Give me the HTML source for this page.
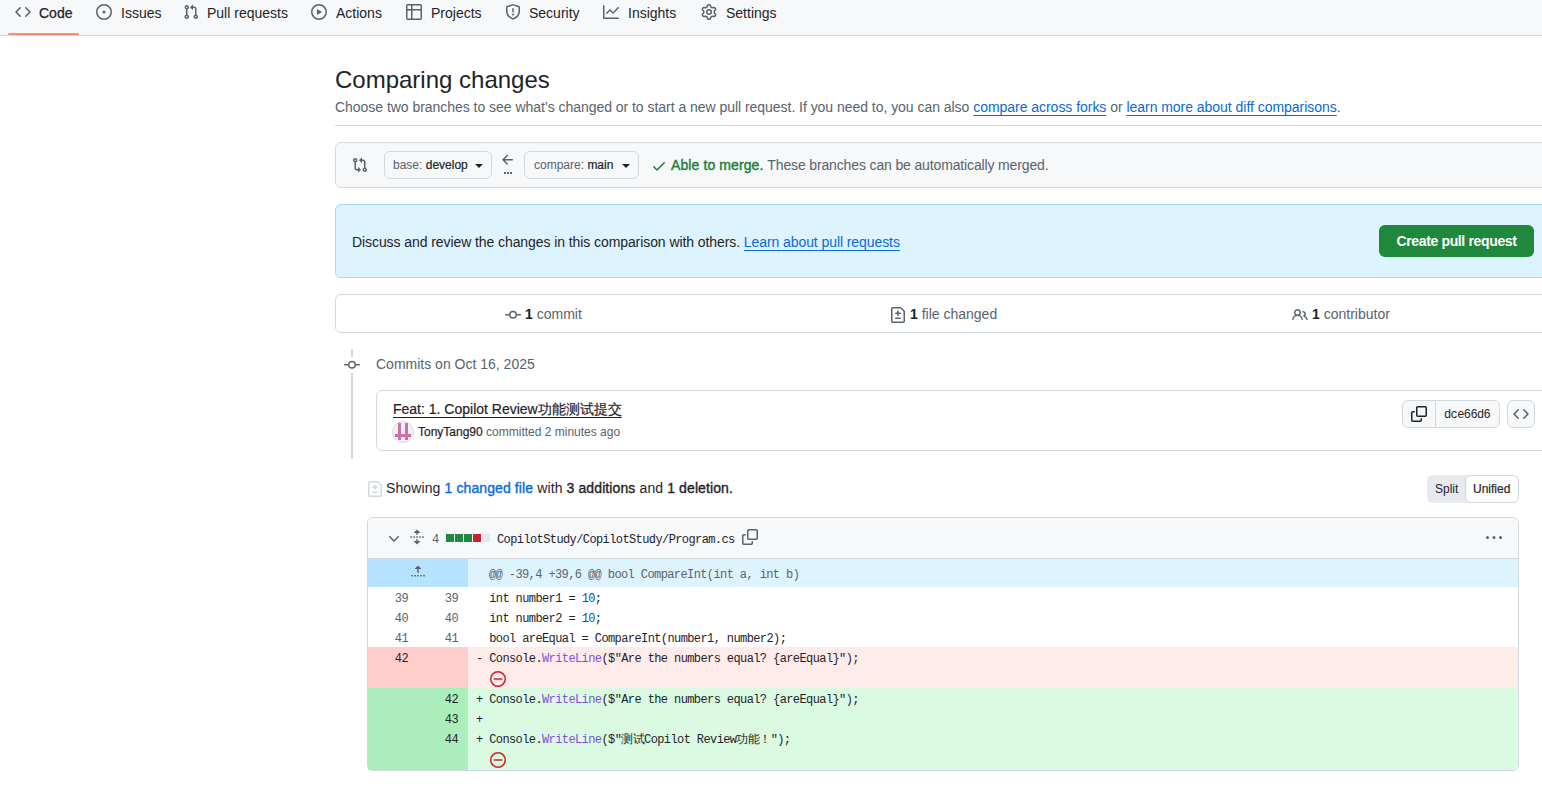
<!DOCTYPE html>
<html><head><meta charset="utf-8">
<style>
*{box-sizing:border-box;margin:0;padding:0}
html,body{width:1542px;height:791px;overflow:hidden;background:#fff}
body{position:relative;font-family:"Liberation Sans",sans-serif;color:#1f2328;font-size:14px;line-height:20px}
.a{position:absolute;white-space:nowrap}
svg{display:block}
.nav{position:absolute;left:0;top:0;width:1542px;height:36px;background:#f6f8fa;border-bottom:1px solid #d1d9e0}
.ni{position:absolute;top:3px;font-size:14px;line-height:20px;color:#1f2328}
.nic{position:absolute;top:4px;fill:#59636e}
.muted{color:#59636e}
.link{color:#0969da;text-decoration:underline;text-underline-offset:3px;text-decoration-skip-ink:none}
.sb{-webkit-text-stroke:0.35px #1f2328}
.mono{font-family:"Liberation Mono",monospace}

.diff .r{position:relative;height:20px;line-height:20px;color:#1f2328}
.diff .n1,.diff .n2{position:absolute;top:0;width:50px;height:20px;text-align:right;padding-right:10px;padding-top:2px;color:#59636e}
.diff .n1{left:0}.diff .n2{left:50px}
.diff .c{position:absolute;left:108px;top:2px;white-space:pre}
.diff .k{color:#0550ae}.diff .f{color:#8250df}
.diff .nl2{position:absolute;left:122px;top:24px;fill:#cf222e}
.diff .nlx{position:absolute;left:122px;top:24px;width:16px;height:16px;border:1.4px solid #cf222e;border-radius:50%}
.diff .nl div{position:absolute;left:2.8px;top:6.5px;width:7.6px;height:1.4px;background:#cf222e}
</style></head><body>

<!-- NAV -->
<div class="nav">
  <div class="a" style="left:8px;top:33px;width:71px;height:2px;background:#fd8c73;border-radius:2px"></div>
  <svg class="nic" style="left:15px" width="16" height="16" viewBox="0 0 16 16"><path d="m11.28 3.22 4.25 4.25a.75.75 0 0 1 0 1.06l-4.25 4.25a.749.749 0 0 1-1.275-.326.749.749 0 0 1 .215-.734L13.94 8l-3.72-3.72a.749.749 0 0 1 .326-1.275.749.749 0 0 1 .734.215Zm-6.56 0a.751.751 0 0 1 1.042.018.751.751 0 0 1 .018 1.042L2.06 8l3.72 3.72a.749.749 0 0 1-.326 1.275.749.749 0 0 1-.734-.215L.47 8.53a.75.75 0 0 1 0-1.06Z"/></svg>
  <div class="ni" style="left:39px;-webkit-text-stroke:0.25px #1f2328">Code</div>
  <svg class="nic" style="left:96px" width="16" height="16" viewBox="0 0 16 16"><path d="M8 9.5a1.5 1.5 0 1 0 0-3 1.5 1.5 0 0 0 0 3Z"/><path d="M8 0a8 8 0 1 1 0 16A8 8 0 0 1 8 0ZM1.5 8a6.5 6.5 0 1 0 13 0 6.5 6.5 0 0 0-13 0Z"/></svg>
  <div class="ni" style="left:121px">Issues</div>
  <svg class="nic" style="left:183px" width="16" height="16" viewBox="0 0 16 16"><path d="M1.5 3.25a2.25 2.25 0 1 1 3 2.122v5.256a2.251 2.251 0 1 1-1.5 0V5.372A2.25 2.25 0 0 1 1.5 3.25Zm5.677-.177L9.573.677A.25.25 0 0 1 10 .854V2.5h1A2.5 2.5 0 0 1 13.5 5v5.628a2.251 2.251 0 1 1-1.5 0V5a1 1 0 0 0-1-1h-1v1.646a.25.25 0 0 1-.427.177L7.177 3.427a.25.25 0 0 1 0-.354ZM3.75 2.5a.75.75 0 1 0 0 1.5.75.75 0 0 0 0-1.5Zm0 9.5a.75.75 0 1 0 0 1.5.75.75 0 0 0 0-1.5Zm8.25.75a.75.75 0 1 0 1.5 0 .75.75 0 0 0-1.5 0Z"/></svg>
  <div class="ni" style="left:207px">Pull requests</div>
  <svg class="nic" style="left:311px" width="16" height="16" viewBox="0 0 16 16"><path d="M8 0a8 8 0 1 1 0 16A8 8 0 0 1 8 0ZM1.5 8a6.5 6.5 0 1 0 13 0 6.5 6.5 0 0 0-13 0Zm4.879-2.773 4.264 2.559a.25.25 0 0 1 0 .428l-4.264 2.559A.25.25 0 0 1 6 10.559V5.442a.25.25 0 0 1 .379-.215Z"/></svg>
  <div class="ni" style="left:336px">Actions</div>
  <svg class="nic" style="left:406px" width="16" height="16" viewBox="0 0 16 16"><path d="M0 1.75C0 .784.784 0 1.75 0h12.5C15.216 0 16 .784 16 1.75v12.5A1.75 1.75 0 0 1 14.25 16H1.75A1.75 1.75 0 0 1 0 14.25ZM6.5 6.5v8h7.75a.25.25 0 0 0 .25-.25V6.5Zm8-1.5V1.75a.25.25 0 0 0-.25-.25H6.5V5Zm-13 1.5v7.75c0 .138.112.25.25.25H5v-8ZM5 5V1.5H1.75a.25.25 0 0 0-.25.25V5Z"/></svg>
  <div class="ni" style="left:431px">Projects</div>
  <svg class="nic" style="left:505px" width="16" height="16" viewBox="0 0 16 16"><path d="M7.467.133a1.748 1.748 0 0 1 1.066 0l5.25 1.68A1.75 1.75 0 0 1 15 3.48V7c0 1.566-.32 3.182-1.303 4.682-.983 1.498-2.585 2.813-5.032 3.855a1.697 1.697 0 0 1-1.33 0c-2.447-1.042-4.049-2.357-5.032-3.855C1.32 10.182 1 8.566 1 7V3.48a1.75 1.75 0 0 1 1.217-1.667Zm.61 1.429a.25.25 0 0 0-.153 0l-5.25 1.68a.25.25 0 0 0-.174.238V7c0 1.358.275 2.666 1.057 3.86.784 1.194 2.121 2.34 4.366 3.297a.196.196 0 0 0 .154 0c2.245-.956 3.582-2.104 4.366-3.298C13.225 9.666 13.5 8.36 13.5 7V3.48a.251.251 0 0 0-.174-.237l-5.25-1.68ZM8.75 4.75v3a.75.75 0 0 1-1.5 0v-3a.75.75 0 0 1 1.5 0ZM9 10.5a1 1 0 1 1-2 0 1 1 0 0 1 2 0Z"/></svg>
  <div class="ni" style="left:529px">Security</div>
  <svg class="nic" style="left:603px" width="16" height="16" viewBox="0 0 16 16"><path d="M1.5 1.75V13.5h13.75a.75.75 0 0 1 0 1.5H.75a.75.75 0 0 1-.75-.75V1.75a.75.75 0 0 1 1.5 0Zm14.28 2.53-5.25 5.25a.75.75 0 0 1-1.06 0L7 7.06 4.28 9.78a.751.751 0 0 1-1.042-.018.751.751 0 0 1-.018-1.042l3.25-3.25a.75.75 0 0 1 1.06 0L10 7.94l4.72-4.72a.751.751 0 0 1 1.042.018.751.751 0 0 1 .018 1.042Z"/></svg>
  <div class="ni" style="left:628px">Insights</div>
  <svg class="nic" style="left:701px" width="16" height="16" viewBox="0 0 16 16"><path d="M8 0a8.2 8.2 0 0 1 .701.031C9.444.095 9.99.645 10.16 1.29l.288 1.107c.018.066.079.158.212.224.231.114.454.243.668.386.123.082.233.09.299.071l1.103-.303c.644-.176 1.392.021 1.82.63.27.385.506.792.704 1.218.315.675.111 1.422-.364 1.891l-.814.806c-.049.048-.098.147-.088.294.016.257.016.515 0 .772-.01.147.038.246.088.294l.814.806c.475.469.679 1.216.364 1.891a7.977 7.977 0 0 1-.704 1.217c-.428.61-1.176.807-1.82.63l-1.102-.302c-.067-.019-.177-.011-.3.071a5.909 5.909 0 0 1-.668.386c-.133.066-.194.158-.211.224l-.29 1.106c-.168.646-.715 1.196-1.458 1.26a8.006 8.006 0 0 1-1.402 0c-.743-.064-1.289-.614-1.458-1.26l-.289-1.106c-.018-.066-.079-.158-.212-.224a5.738 5.738 0 0 1-.668-.386c-.123-.082-.233-.09-.299-.071l-1.103.303c-.644.176-1.392-.021-1.82-.63a8.12 8.12 0 0 1-.704-1.218c-.315-.675-.111-1.422.363-1.891l.815-.806c.05-.048.098-.147.088-.294a6.214 6.214 0 0 1 0-.772c.01-.147-.038-.246-.088-.294l-.815-.806C.635 6.045.431 5.298.746 4.623a7.92 7.92 0 0 1 .704-1.217c.428-.61 1.176-.807 1.82-.63l1.102.302c.067.019.177.011.3-.071.214-.143.437-.272.668-.386.133-.066.194-.158.211-.224l.29-1.106C6.009.645 6.556.095 7.299.03 7.53.01 7.764 0 8 0Zm-.571 1.525c-.036.003-.108.036-.137.146l-.289 1.105c-.147.561-.549.967-.998 1.189-.173.086-.34.183-.5.29-.417.278-.97.423-1.529.27l-1.103-.303c-.109-.03-.175.016-.195.045-.22.312-.412.644-.573.99-.014.031-.021.11.059.19l.815.806c.411.406.562.957.53 1.456a4.709 4.709 0 0 0 0 .582c.032.499-.119 1.05-.53 1.456l-.815.806c-.081.08-.073.159-.059.19.162.346.353.677.573.989.02.03.085.076.195.046l1.102-.303c.56-.153 1.113-.008 1.53.27.161.107.328.204.501.29.447.222.85.629.997 1.189l.289 1.105c.029.109.101.143.137.146a6.6 6.6 0 0 0 1.142 0c.036-.003.108-.036.137-.146l.289-1.105c.147-.561.549-.967.998-1.189.173-.086.34-.183.5-.29.417-.278.97-.423 1.529-.27l1.103.303c.109.029.175-.016.195-.045.22-.313.411-.644.573-.99.014-.031.021-.11-.059-.19l-.815-.806c-.411-.406-.562-.957-.53-1.456a4.709 4.709 0 0 0 0-.582c-.032-.499.119-1.05.53-1.456l.815-.806c.081-.08.073-.159.059-.19a6.464 6.464 0 0 0-.573-.989c-.02-.03-.085-.076-.195-.046l-1.102.303c-.56.153-1.113.008-1.53-.27a4.44 4.44 0 0 0-.501-.29c-.447-.222-.85-.629-.997-1.189l-.289-1.105c-.029-.11-.101-.143-.137-.146a6.6 6.6 0 0 0-1.142 0ZM11 8a3 3 0 1 1-6 0 3 3 0 0 1 6 0ZM9.5 8a1.5 1.5 0 1 0-3.001.001A1.5 1.5 0 0 0 9.5 8Z"/></svg>
  <div class="ni" style="left:726px">Settings</div>
</div>

<!-- HEADER -->
<div class="a" style="left:335px;top:64px;font-size:24px;line-height:32px">Comparing changes</div>
<div class="a muted" style="left:335px;top:97px;letter-spacing:-0.035px">Choose two branches to see what’s changed or to start a new pull request. If you need to, you can also <span class="link">compare across forks</span> or <span class="link">learn more about diff comparisons</span>.</div>
<div class="a" style="left:335px;top:125px;width:1207px;height:1px;background:#d1d9e0"></div>


<!-- RANGE EDITOR -->
<div class="a" style="left:335px;top:142px;width:1250px;height:46px;background:#f6f8fa;border:1px solid #d1d9e0;border-radius:6px"></div>
<svg class="a" style="left:352px;top:157px;fill:#59636e" width="16" height="16" viewBox="0 0 16 16"><path d="M9.573.677A.25.25 0 0 1 10 .854V2.5h1A2.5 2.5 0 0 1 13.5 5v5.628a2.251 2.251 0 1 1-1.5 0V5a1 1 0 0 0-1-1h-1v1.646a.25.25 0 0 1-.427.177L7.177 3.427a.25.25 0 0 1 0-.354ZM6 12v-1.646a.25.25 0 0 1 .427-.177l2.396 2.396a.25.25 0 0 1 0 .354l-2.396 2.396A.25.25 0 0 1 6 15.146V13.5H5A2.5 2.5 0 0 1 2.5 11V5.372a2.25 2.25 0 1 1 1.5 0V11a1 1 0 0 0 1 1ZM4 3.25a.75.75 0 1 0-1.5 0 .75.75 0 0 0 1.5 0ZM12.75 12a.75.75 0 1 0 0 1.5.75.75 0 0 0 0-1.5Z"/></svg>
<div class="a" style="left:384px;top:151px;width:108px;height:28px;border:1px solid #d1d9e0;border-radius:6px;background:#f6f8fa"></div>
<div class="a" style="left:393px;top:155px;font-size:12px;line-height:20px"><span class="muted">base:</span> <span style="-webkit-text-stroke:0.2px #1f2328">develop</span></div>
<div class="a" style="left:475px;top:164px;width:0;height:0;border-left:4px solid transparent;border-right:4px solid transparent;border-top:4px solid #1f2328"></div>
<svg class="a" style="left:500px;top:152px;fill:#59636e" width="16" height="16" viewBox="0 0 16 16"><path d="M7.78 12.53a.75.75 0 0 1-1.06 0L2.47 8.28a.75.75 0 0 1 0-1.06l4.25-4.25a.751.751 0 0 1 1.042.018.751.751 0 0 1 .018 1.042L4.81 7h7.44a.75.75 0 0 1 0 1.5H4.81l2.97 2.97a.75.75 0 0 1 0 1.06Z"/></svg>
<div class="a" style="left:504px;top:172px;width:2px;height:2px;background:#59636e"></div>
<div class="a" style="left:507px;top:172px;width:2px;height:2px;background:#59636e"></div>
<div class="a" style="left:510px;top:172px;width:2px;height:2px;background:#59636e"></div>
<div class="a" style="left:524px;top:151px;width:115px;height:28px;border:1px solid #d1d9e0;border-radius:6px;background:#f6f8fa"></div>
<div class="a" style="left:534px;top:155px;font-size:12px;line-height:20px"><span class="muted">compare:</span> <span style="-webkit-text-stroke:0.2px #1f2328">main</span></div>
<div class="a" style="left:622px;top:164px;width:0;height:0;border-left:4px solid transparent;border-right:4px solid transparent;border-top:4px solid #1f2328"></div>
<svg class="a" style="left:651px;top:158px;fill:#1a7f37" width="16" height="16" viewBox="0 0 16 16"><path d="M13.78 4.22a.75.75 0 0 1 0 1.06l-7.25 7.25a.75.75 0 0 1-1.06 0L2.22 9.28a.751.751 0 0 1 .018-1.042.751.751 0 0 1 1.042-.018L6 10.94l6.72-6.72a.75.75 0 0 1 1.06 0Z"/></svg>
<div class="a" style="left:671px;top:155px"><span style="color:#1a7f37;-webkit-text-stroke:0.4px #1a7f37;letter-spacing:0.1px">Able to merge.</span> <span class="muted" style="letter-spacing:-0.14px">These branches can be automatically merged.</span></div>

<!-- FLASH -->
<div class="a" style="left:335px;top:204px;width:1215px;height:74px;background:#ddf4ff;border:1px solid #a6d8ff;border-radius:6px"></div>
<div class="a" style="left:352px;top:232px;letter-spacing:-0.08px">Discuss and review the changes in this comparison with others. <span class="link">Learn about pull requests</span></div>
<div class="a" style="left:1379px;top:225px;width:155px;height:32px;background:#1f883d;border-radius:6px;color:#fff;font-weight:bold;text-align:center;line-height:32px;letter-spacing:-0.35px">Create pull request</div>

<!-- SUMMARY -->
<div class="a" style="left:335px;top:294px;width:1250px;height:39px;border:1px solid #d1d9e0;border-radius:6px"></div>
<svg class="a" style="left:505px;top:307px;fill:#59636e" width="16" height="16" viewBox="0 0 16 16"><path d="M11.93 8.5a4.002 4.002 0 0 1-7.86 0H.75a.75.75 0 0 1 0-1.5h3.32a4.002 4.002 0 0 1 7.86 0h3.32a.75.75 0 0 1 0 1.5Zm-1.43-.75a2.5 2.5 0 1 0-5 0 2.5 2.5 0 0 0 5 0Z"/></svg>
<div class="a" style="left:525px;top:304px"><b>1</b> <span class="muted">commit</span></div>
<svg class="a" style="left:890px;top:307px;fill:#59636e" width="16" height="16" viewBox="0 0 16 16"><path d="M1 1.75C1 .784 1.784 0 2.75 0h7.586c.464 0 .909.184 1.237.513l2.914 2.914c.329.328.513.773.513 1.237v9.586A1.75 1.75 0 0 1 13.25 16H2.75A1.75 1.75 0 0 1 1 14.25Zm1.75-.25a.25.25 0 0 0-.25.25v12.5c0 .138.112.25.25.25h10.5a.25.25 0 0 0 .25-.25V4.664a.25.25 0 0 0-.073-.177l-2.914-2.914a.25.25 0 0 0-.177-.073ZM8 3.25a.75.75 0 0 1 .75.75v1.5h1.5a.75.75 0 0 1 0 1.5h-1.5v1.5a.75.75 0 0 1-1.5 0V7h-1.5a.75.75 0 0 1 0-1.5h1.5V4A.75.75 0 0 1 8 3.25Zm-3 8a.75.75 0 0 1 .75-.75h4.5a.75.75 0 0 1 0 1.5h-4.5a.75.75 0 0 1-.75-.75Z"/></svg>
<div class="a" style="left:910px;top:304px"><b>1</b> <span class="muted">file changed</span></div>
<svg class="a" style="left:1292px;top:307px;fill:#59636e" width="16" height="16" viewBox="0 0 16 16"><path d="M2 5.5a3.5 3.5 0 1 1 5.898 2.549 5.508 5.508 0 0 1 3.034 4.084.75.75 0 1 1-1.482.235 4 4 0 0 0-7.9 0 .75.75 0 0 1-1.482-.236A5.507 5.507 0 0 1 3.102 8.05 3.493 3.493 0 0 1 2 5.5ZM11 4a3.001 3.001 0 0 1 2.22 5.018 5.01 5.01 0 0 1 2.56 3.012.749.749 0 0 1-.885.954.752.752 0 0 1-.549-.514 3.507 3.507 0 0 0-2.522-2.372.75.75 0 0 1-.574-.73v-.352a.75.75 0 0 1 .416-.672A1.5 1.5 0 0 0 11 5.5.75.75 0 0 1 11 4Zm-5.5-.5a2 2 0 1 0-.001 3.999A2 2 0 0 0 5.5 3.5Z"/></svg>
<div class="a" style="left:1312px;top:304px"><b>1</b> <span class="muted">contributor</span></div>


<!-- COMMITS -->
<div class="a" style="left:351px;top:349px;width:2px;height:110px;background:#d1d9e0"></div>
<div class="a" style="left:343px;top:357px;width:18px;height:16px;background:#fff"></div>
<svg class="a" style="left:344px;top:357px;fill:#59636e" width="16" height="16" viewBox="0 0 16 16"><path d="M11.93 8.5a4.002 4.002 0 0 1-7.86 0H.75a.75.75 0 0 1 0-1.5h3.32a4.002 4.002 0 0 1 7.86 0h3.32a.75.75 0 0 1 0 1.5Zm-1.43-.75a2.5 2.5 0 1 0-5 0 2.5 2.5 0 0 0 5 0Z"/></svg>
<div class="a muted" style="left:376px;top:354px">Commits on Oct 16, 2025</div>
<div class="a" style="left:376px;top:390px;width:1200px;height:61px;border:1px solid #d1d9e0;border-radius:6px"></div>
<div class="a" style="left:393px;top:399px;text-decoration:underline;text-underline-offset:3px;text-decoration-skip-ink:none;-webkit-text-stroke:0.2px #1f2328">Feat: 1. Copilot Review功能测试提交</div>
<div class="a" style="left:392px;top:421px;width:22px;height:22px;border-radius:50%;background:#f2f2f2;border:1px solid #dcdcdc"></div>
<div class="a" style="left:398px;top:423px;width:3px;height:17px;background:#d070a8"></div>
<div class="a" style="left:405px;top:423px;width:3px;height:17px;background:#d070a8"></div>
<div class="a" style="left:395px;top:434px;width:16px;height:3px;background:#d070a8"></div>
<div class="a" style="left:418px;top:422px;font-size:12px;line-height:20px"><span style="-webkit-text-stroke:0.2px #1f2328">TonyTang90</span> <span class="muted">committed 2 minutes ago</span></div>
<div class="a" style="left:1402px;top:400px;width:98px;height:28px;border:1px solid #d1d9e0;border-radius:6px;background:#f6f8fa"></div>
<div class="a" style="left:1435px;top:401px;width:1px;height:26px;background:#d1d9e0"></div>
<svg class="a" style="left:1411px;top:406px;fill:#1f2328" width="16" height="16" viewBox="0 0 16 16"><path d="M0 6.75C0 5.784.784 5 1.75 5h1.5a.75.75 0 0 1 0 1.5h-1.5a.25.25 0 0 0-.25.25v7.5c0 .138.112.25.25.25h7.5a.25.25 0 0 0 .25-.25v-1.5a.75.75 0 0 1 1.5 0v1.5A1.75 1.75 0 0 1 9.25 16h-7.5A1.75 1.75 0 0 1 0 14.25Z"/><path d="M5 1.75C5 .784 5.784 0 6.75 0h7.5C15.216 0 16 .784 16 1.75v7.5A1.75 1.75 0 0 1 14.25 11h-7.5A1.75 1.75 0 0 1 5 9.25Zm1.75-.25a.25.25 0 0 0-.25.25v7.5c0 .138.112.25.25.25h7.5a.25.25 0 0 0 .25-.25v-7.5a.25.25 0 0 0-.25-.25Z"/></svg>
<div class="a mono" style="left:1444px;top:405px;font-size:12px;line-height:20px;letter-spacing:-0.6px;color:#1f2328">dce66d6</div>
<div class="a" style="left:1507px;top:400px;width:28px;height:28px;border:1px solid #d1d9e0;border-radius:6px;background:#f6f8fa"></div>
<svg class="a" style="left:1513px;top:406px;fill:#59636e" width="16" height="16" viewBox="0 0 16 16"><path d="m11.28 3.22 4.25 4.25a.75.75 0 0 1 0 1.06l-4.25 4.25a.749.749 0 0 1-1.275-.326.749.749 0 0 1 .215-.734L13.94 8l-3.72-3.72a.749.749 0 0 1 .326-1.275.749.749 0 0 1 .734.215Zm-6.56 0a.751.751 0 0 1 1.042.018.751.751 0 0 1 .018 1.042L2.06 8l3.72 3.72a.749.749 0 0 1-.326 1.275.749.749 0 0 1-.734-.215L.47 8.53a.75.75 0 0 1 0-1.06Z"/></svg>

<!-- SHOWING -->
<svg class="a" style="left:367px;top:481px;fill:#d1d9e0" width="16" height="16" viewBox="0 0 16 16"><path d="M1 1.75C1 .784 1.784 0 2.75 0h7.586c.464 0 .909.184 1.237.513l2.914 2.914c.329.328.513.773.513 1.237v9.586A1.75 1.75 0 0 1 13.25 16H2.75A1.75 1.75 0 0 1 1 14.25Zm1.75-.25a.25.25 0 0 0-.25.25v12.5c0 .138.112.25.25.25h10.5a.25.25 0 0 0 .25-.25V4.664a.25.25 0 0 0-.073-.177l-2.914-2.914a.25.25 0 0 0-.177-.073ZM8 3.25a.75.75 0 0 1 .75.75v1.5h1.5a.75.75 0 0 1 0 1.5h-1.5v1.5a.75.75 0 0 1-1.5 0V7h-1.5a.75.75 0 0 1 0-1.5h1.5V4A.75.75 0 0 1 8 3.25Zm-3 8a.75.75 0 0 1 .75-.75h4.5a.75.75 0 0 1 0 1.5h-4.5a.75.75 0 0 1-.75-.75Z"/></svg>
<div class="a" style="left:386px;top:478px;letter-spacing:0.11px">Showing <span class="sb" style="color:#0969da;-webkit-text-stroke-color:#0969da">1 changed file</span> with <span class="sb">3 additions</span> and <span class="sb">1 deletion.</span></div>
<div class="a" style="left:1427px;top:475px;width:92px;height:28px;border-radius:6px;background:#e6eaef"></div>
<div class="a" style="left:1465px;top:475px;width:54px;height:28px;border-radius:6px;background:#fff;border:1px solid #d1d9e0"></div>
<div class="a" style="left:1435px;top:479px;font-size:12px;line-height:20px">Split</div>
<div class="a" style="left:1473px;top:479px;font-size:12px;line-height:20px;-webkit-text-stroke:0.2px #1f2328">Unified</div>

<!-- FILE -->
<div class="a" style="left:367px;top:517px;width:1152px;height:254px;border:1px solid #d1d9e0;border-radius:6px;background:#fff"></div>
<div class="a" style="left:368px;top:518px;width:1150px;height:41px;background:#f6f8fa;border-bottom:1px solid #d1d9e0;border-radius:5px 5px 0 0"></div>
<svg class="a" style="left:386px;top:531px;fill:#59636e" width="16" height="16" viewBox="0 0 16 16"><path d="M12.78 5.22a.749.749 0 0 1 0 1.06l-4.25 4.25a.749.749 0 0 1-1.06 0L3.22 6.28a.749.749 0 0 1 .326-1.275.749.749 0 0 1 .734.215L8 8.939l3.72-3.719a.749.749 0 0 1 1.06 0Z"/></svg>
<svg class="a" style="left:409px;top:529px;fill:#59636e" width="16" height="16" viewBox="0 0 16 16"><path d="m8.177.677 2.896 2.896a.25.25 0 0 1-.177.427H8.75v1.25a.75.75 0 0 1-1.5 0V4H5.104a.25.25 0 0 1-.177-.427L7.823.677a.25.25 0 0 1 .354 0ZM7.25 10.75a.75.75 0 0 1 1.5 0V12h2.146a.25.25 0 0 1 .177.427l-2.896 2.896a.25.25 0 0 1-.354 0l-2.896-2.896A.25.25 0 0 1 5.104 12H7.25v-1.25Zm-5-2a.75.75 0 0 0 0-1.5h-.5a.75.75 0 0 0 0 1.5h.5ZM6 8a.75.75 0 0 1-.75.75h-.5a.75.75 0 0 1 0-1.5h.5A.75.75 0 0 1 6 8Zm2.25.75a.75.75 0 0 0 0-1.5h-.5a.75.75 0 0 0 0 1.5h.5ZM12 8a.75.75 0 0 1-.75.75h-.5a.75.75 0 0 1 0-1.5h.5A.75.75 0 0 1 12 8Zm2.25.75a.75.75 0 0 0 0-1.5h-.5a.75.75 0 0 0 0 1.5h.5Z"/></svg>
<div class="a mono" style="left:432px;top:530px;font-size:12px;line-height:20px;letter-spacing:-0.6px;color:#59636e">4</div>
<div class="a" style="left:446px;top:534px;width:8px;height:8px;background:#1f883d"></div>
<div class="a" style="left:455px;top:534px;width:8px;height:8px;background:#1f883d"></div>
<div class="a" style="left:464px;top:534px;width:8px;height:8px;background:#1f883d"></div>
<div class="a" style="left:473px;top:534px;width:8px;height:8px;background:#cf222e"></div>
<div class="a" style="left:482px;top:534px;width:8px;height:8px;background:#e6eaef"></div>
<div class="a mono" style="left:497px;top:530px;font-size:12px;line-height:20px;letter-spacing:-0.6px;color:#1f2328">CopilotStudy/CopilotStudy/Program.cs</div>
<svg class="a" style="left:742px;top:529px;fill:#59636e" width="16" height="16" viewBox="0 0 16 16"><path d="M0 6.75C0 5.784.784 5 1.75 5h1.5a.75.75 0 0 1 0 1.5h-1.5a.25.25 0 0 0-.25.25v7.5c0 .138.112.25.25.25h7.5a.25.25 0 0 0 .25-.25v-1.5a.75.75 0 0 1 1.5 0v1.5A1.75 1.75 0 0 1 9.25 16h-7.5A1.75 1.75 0 0 1 0 14.25Z"/><path d="M5 1.75C5 .784 5.784 0 6.75 0h7.5C15.216 0 16 .784 16 1.75v7.5A1.75 1.75 0 0 1 14.25 11h-7.5A1.75 1.75 0 0 1 5 9.25Zm1.75-.25a.25.25 0 0 0-.25.25v7.5c0 .138.112.25.25.25h7.5a.25.25 0 0 0 .25-.25v-7.5a.25.25 0 0 0-.25-.25Z"/></svg>
<svg class="a" style="left:1486px;top:530px;fill:#59636e" width="16" height="16" viewBox="0 0 16 16"><path d="M8 9a1.5 1.5 0 1 0 0-3 1.5 1.5 0 0 0 0 3ZM1.5 9a1.5 1.5 0 1 0 0-3 1.5 1.5 0 0 0 0 3Zm13 0a1.5 1.5 0 1 0 0-3 1.5 1.5 0 0 0 0 3Z"/></svg>

<div class="diff mono" style="position:absolute;left:368px;top:559px;width:1150px;font-size:12px;letter-spacing:-0.6px">
 <div class="r" style="height:28px;background:#ddf4ff">
   <div class="n1" style="background:#b6e3ff;width:100px;height:28px"></div>
   <svg style="position:absolute;left:42px;top:5px;fill:#59636e" width="16" height="16" viewBox="0 0 16 16"><path d="M7.823 1.677 4.927 4.573A.25.25 0 0 0 5.104 5H7.25v3.236a.75.75 0 1 0 1.5 0V5h2.146a.25.25 0 0 0 .177-.427L8.177 1.677a.25.25 0 0 0-.354 0ZM13.75 11a.75.75 0 0 0 0 1.5h.5a.75.75 0 0 0 0-1.5h-.5Zm-3.75.75a.75.75 0 0 1 .75-.75h.5a.75.75 0 0 1 0 1.5h-.5a.75.75 0 0 1-.75-.75ZM7.75 11a.75.75 0 0 0 0 1.5h.5a.75.75 0 0 0 0-1.5h-.5ZM4 11.75a.75.75 0 0 1 .75-.75h.5a.75.75 0 0 1 0 1.5h-.5a.75.75 0 0 1-.75-.75ZM1.75 11a.75.75 0 0 0 0 1.5h.5a.75.75 0 0 0 0-1.5h-.5Z"/></svg>
   <div class="c muted" style="left:121px;line-height:28px;top:2px">@@ -39,4 +39,6 @@ bool CompareInt(int a, int b)</div>
 </div>
 <div class="r"><div class="n1">39</div><div class="n2">39</div><div class="c">  int number1 = <span class="k">10</span>;</div></div>
 <div class="r"><div class="n1">40</div><div class="n2">40</div><div class="c">  int number2 = <span class="k">10</span>;</div></div>
 <div class="r"><div class="n1">41</div><div class="n2">41</div><div class="c">  bool areEqual = CompareInt(number1, number2);</div></div>
 <div class="r" style="height:41px;background:#ffebe9"><div class="n1" style="background:#ffcecb;height:41px;color:#1f2328">42</div><div class="n2" style="background:#ffcecb;height:41px"></div><div class="c">- Console.<span class="f">WriteLine</span>($"Are the numbers equal? {areEqual}");</div><svg class="nl2" width="16" height="16" viewBox="0 0 16 16"><path d="M4.25 7.25a.75.75 0 0 0 0 1.5h7.5a.75.75 0 0 0 0-1.5h-7.5Z"/><path d="M16 8A8 8 0 1 1 0 8a8 8 0 0 1 16 0Zm-1.5 0a6.5 6.5 0 1 0-13 0 6.5 6.5 0 0 0 13 0Z"/></svg></div>
 <div class="r" style="background:#dafbe1"><div class="n1" style="background:#aceebb"></div><div class="n2" style="background:#aceebb;color:#1f2328">42</div><div class="c">+ Console.<span class="f">WriteLine</span>($"Are the numbers equal? {areEqual}");</div></div>
 <div class="r" style="background:#dafbe1"><div class="n1" style="background:#aceebb"></div><div class="n2" style="background:#aceebb;color:#1f2328">43</div><div class="c">+ </div></div>
 <div class="r" style="height:42px;background:#dafbe1"><div class="n1" style="background:#aceebb;height:42px"></div><div class="n2" style="background:#aceebb;height:42px;color:#1f2328">44</div><div class="c">+ Console.<span class="f">WriteLine</span>($"测试Copilot Review功能！");</div><svg class="nl2" width="16" height="16" viewBox="0 0 16 16"><path d="M4.25 7.25a.75.75 0 0 0 0 1.5h7.5a.75.75 0 0 0 0-1.5h-7.5Z"/><path d="M16 8A8 8 0 1 1 0 8a8 8 0 0 1 16 0Zm-1.5 0a6.5 6.5 0 1 0-13 0 6.5 6.5 0 0 0 13 0Z"/></svg></div>
</div>

</body></html>
